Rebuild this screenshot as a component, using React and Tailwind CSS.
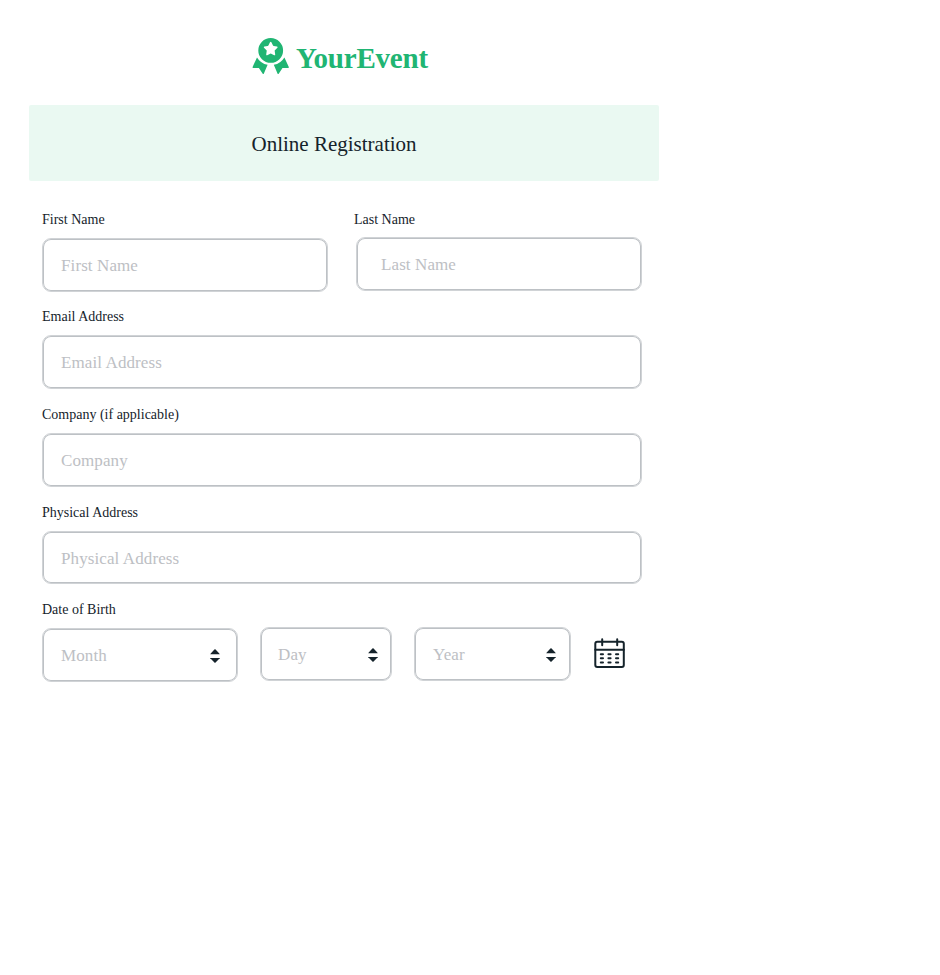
function Sorter() {
  return (
    <svg width="10" height="16" viewBox="0 0 10 16" fill="#15232b" className="shrink-0">
      <path d="M.3 5.900 4.400 1.400q.6-.5 1.200 0L9.700 5.900v.4H.3Z" />
      <path d="M.3 10.300v-.4h9.400v.4L5.600 14.600q-.6.5-1.200 0Z" />
    </svg>
  );
}

function Label({ children, className = "" }) {
  return <div className={"h-4 text-[14px] leading-4 whitespace-nowrap text-[#15232b] " + className}>{children}</div>;
}

function Field({ text, className, height = "h-[54px]", sorter }) {
  return (
    <div className={"flex shrink-0 items-center justify-between rounded-[9px] border border-[#d0d3d6] px-px pt-[2px] whitespace-nowrap text-[17px] leading-5 tracking-[0.1px] text-[#bdc0c4] shadow-[inset_0_0_0_1px_#bdc1c5] " + height + " " + className}>
      <span>{text}</span>
      {sorter && <Sorter />}
    </div>
  );
}

function Award() {
  return (
    <svg width="37" height="38" viewBox="0 0 37 38" fill="#20b573">
      <path fillRule="evenodd" d="M18.700 1a12.400 12.400 0 1 1 0 24.800A12.400 12.400 0 0 1 18.700 1Zm-.7 4.300-1.600 3.200q-.2.400-.7.500l-3.300.5q-1.100.3-.4 1.200l2.500 2.500q.3.300.2.800l-.5 3.500q0 1.100 1 .8l3-1.600q.5-.3 1 0l3 1.600q1 .3 1-.8l-.5-3.500q-.1-.5.2-.8l2.500-2.500q.7-.9-.4-1.200l-3.300-.5q-.5-.1-.7-.5l-1.600-3.200q-.7-1.100-1.400 0Z" />
      <path d="M5 20.400A15.500 15.500 0 0 0 15.600 27.700l-3.800 9q-.5.800-1.100 0L6.900 30.900l-5.600.1q-1.100-.1-.7-1.100Z" />
      <path d="M32.400 20.400A15.500 15.500 0 0 1 21.800 27.700l3.800 9q.5.800 1.100 0l3.800-5.800 5.600.1q1.100-.1.700-1.100Z" />
    </svg>
  );
}

function Calendar() {
  return (
    <svg width="32" height="32" viewBox="0 0 32 32" fill="none" stroke="#15232b" strokeWidth="2" strokeLinecap="round">
      <rect x="2.300" y="4.800" width="28.500" height="25.300" rx="2" />
      <path d="M2.300 12.700h28.500M9.200 2.200v6M24.200 2.200v6" />
      <path d="M7.800 17.200h2.200M15.400 17.200h2.200M23 17.200h2.200M7.800 21.300h2.200M15.400 21.300h2.200M23 21.300h2.200M7.800 25.500h2.200M15.400 25.500h2.200M23 25.500h2.200" strokeWidth="2" />
    </svg>
  );
}

export default function App() {
  return (
    <main className="min-h-[975px] w-[940px] bg-white pl-[29px] font-['Liberation_Serif',serif]">
      <div className="w-[630px]">
        <header className="flex h-[105px] items-start pt-[37px] pl-[223px]">
          <Award />
          <span className="mt-[4px] ml-[7px] text-[29px] leading-[34px] font-bold tracking-[-0.2px] text-[#20b573]">YourEvent</span>
        </header>
        <h1 className="h-[76px] rounded-[2px] bg-[#eaf9f2] pt-[27px] pl-[222.500px] text-[21px] leading-6 text-[#15232b]">Online Registration</h1>
        <form className="pt-[31px] pl-[13px]">
          <div className="flex">
            <div className="w-[312px]">
              <Label>First Name</Label>
              <Field text="First Name" className="mt-[10px] w-[286px] pl-[18px]" />
            </div>
            <div>
              <Label>Last Name</Label>
              <Field text="Last Name" className="mt-[9px] ml-[2px] w-[286px] pl-[24px]" />
            </div>
          </div>
          <Label className="mt-[17px]">Email Address</Label>
          <Field text="Email Address" className="mt-[10px] w-[600px] pl-[18px]" />
          <Label className="mt-[18px]">Company (if applicable)</Label>
          <Field text="Company" className="mt-[10px] w-[600px] pl-[18px]" />
          <Label className="mt-[18px]">Physical Address</Label>
          <Field text="Physical Address" height="h-[53px]" className="mt-[10px] w-[600px] pl-[18px]" />
          <Label className="mt-[18px]">Date of Birth</Label>
          <div className="mt-[9px] flex items-start">
            <Field text="Month" sorter className="mt-px w-[196px] pr-[17px] pl-[18px]" />
            <Field text="Day" sorter className="ml-[22px] w-[132px] pr-[13px] pl-[17px]" />
            <Field text="Year" sorter className="ml-[22px] w-[157px] pr-[14px] pl-[18px]" />
            <div className="mt-[10px] ml-[22px]"><Calendar /></div>
          </div>
        </form>
      </div>
    </main>
  );
}
